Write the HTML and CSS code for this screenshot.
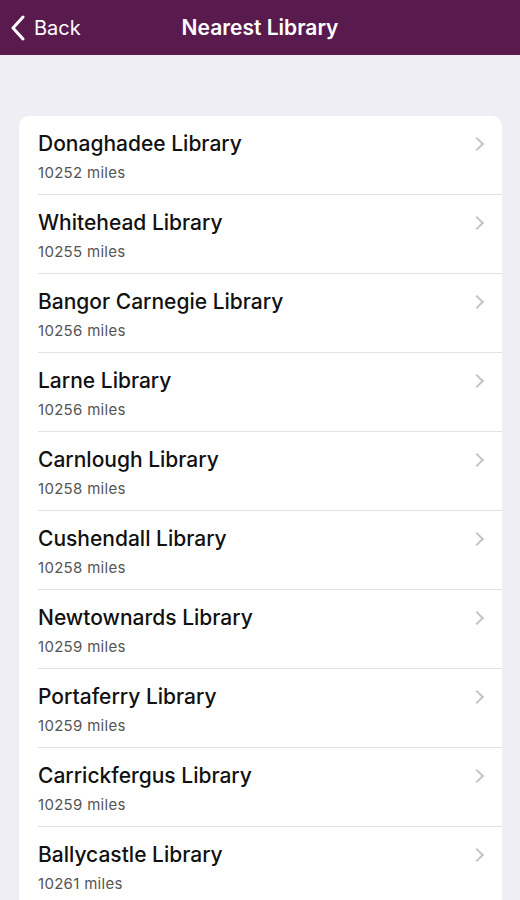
FILE: index.html
```html
<html>
	<head>
		<title>Nearest Library</title>
		<meta charset="UTF-8">
		<meta name="viewport" content="width=device-width, initial-scale=1">
		<link rel="stylesheet" href="styles.css">
	</head>
	<body>
		<div class="navbar">
			<div class="back">
				<svg width="16" height="26" viewBox="0 0 16 26"><path d="M13 2 L3 13 L13 24" fill="none" stroke="#fff" stroke-width="3" stroke-linecap="round" stroke-linejoin="round"/></svg>
				<span>Back</span>
			</div>
			<div class="title">Nearest Library</div>
		</div>
		<div class="content">
			<div class="list">
				<div class="row"><div class="text"><div class="name">Donaghadee Library</div><div class="dist">10252 miles</div></div><div class="chev"></div></div>
				<div class="row"><div class="text"><div class="name">Whitehead Library</div><div class="dist">10255 miles</div></div><div class="chev"></div></div>
				<div class="row"><div class="text"><div class="name">Bangor Carnegie Library</div><div class="dist">10256 miles</div></div><div class="chev"></div></div>
				<div class="row"><div class="text"><div class="name">Larne Library</div><div class="dist">10256 miles</div></div><div class="chev"></div></div>
				<div class="row"><div class="text"><div class="name">Carnlough Library</div><div class="dist">10258 miles</div></div><div class="chev"></div></div>
				<div class="row"><div class="text"><div class="name">Cushendall Library</div><div class="dist">10258 miles</div></div><div class="chev"></div></div>
				<div class="row"><div class="text"><div class="name">Newtownards Library</div><div class="dist">10259 miles</div></div><div class="chev"></div></div>
				<div class="row"><div class="text"><div class="name">Portaferry Library</div><div class="dist">10259 miles</div></div><div class="chev"></div></div>
				<div class="row"><div class="text"><div class="name">Carrickfergus Library</div><div class="dist">10259 miles</div></div><div class="chev"></div></div>
				<div class="row last"><div class="text"><div class="name">Ballycastle Library</div><div class="dist">10261 miles</div></div><div class="chev"></div></div>
			</div>
		</div>
	</body>
</html>
```

FILE: styles.css
```css
body {
	margin: 0;
	background: #efeef4;
	font-family: Inter, "Liberation Sans", sans-serif;
	overflow: hidden;
	height: 900px;
}
.navbar {
	height: 55px;
	background: #591a4e;
	color: #fff;
	display: flex;
	align-items: center;
	position: relative;
}
.back {
	display: flex;
	align-items: center;
	gap: 8px;
	padding-left: 10px;
	font-size: 20px;
}
.title {
	position: absolute;
	left: 0;
	right: 0;
	text-align: center;
	font-size: 21px;
	font-weight: 600;
	pointer-events: none;
}
.content {
	padding: 61px 18px 0 19px;
}
.list {
	background: #fff;
	border-radius: 10px;
	overflow: hidden;
}
.row {
	display: flex;
	align-items: flex-start;
	margin-left: 19px;
	padding: 16px 20px 12px 0;
	border-bottom: 1px solid #e2e2e6;
}
.row.last {
	border-bottom: none;
	padding-bottom: 20px;
}
.text {
	flex: 1;
}
.name {
	font-size: 21px;
	line-height: 24px;
	font-weight: 500;
	color: #111;
}
.dist {
	margin-top: 8px;
	font-size: 15px;
	line-height: 18px;
	color: #555;
	letter-spacing: 0.3px;
}
.chev {
	width: 8px;
	height: 8px;
	margin-top: 7px;
	border-top: 2px solid #c4c4c8;
	border-right: 2px solid #c4c4c8;
	transform: rotate(45deg);
}
```
